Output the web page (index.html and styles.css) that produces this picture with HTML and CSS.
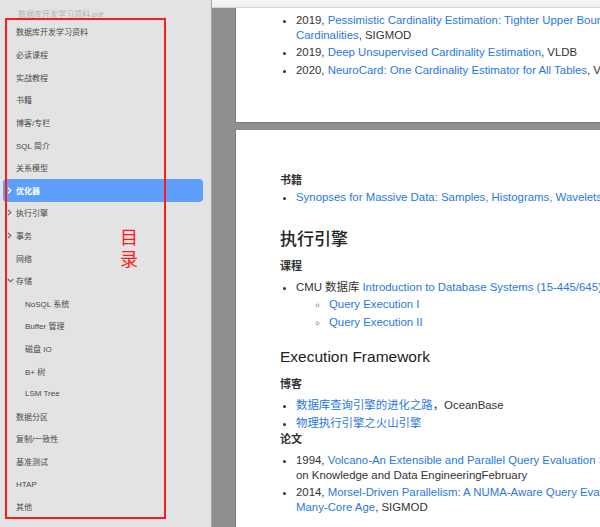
FILE: index.html
```html
<!DOCTYPE html>
<html lang="zh">
<head>
<meta charset="utf-8">
<title>数据库开发学习资料.pdf</title>
<link rel="stylesheet" href="styles.css">
</head>
<body>
<div class="app">
  <aside class="sidebar">
    <div class="doc-title">数据库开发学习资料.pdf</div>
    <ul class="toc">
      <li class="toc-item"><span class="twisty"></span>数据库开发学习资料</li>
      <li class="toc-item"><span class="twisty"></span>必读课程</li>
      <li class="toc-item"><span class="twisty"></span>实战教程</li>
      <li class="toc-item"><span class="twisty"></span>书籍</li>
      <li class="toc-item"><span class="twisty"></span>博客/专栏</li>
      <li class="toc-item"><span class="twisty"></span>SQL 简介</li>
      <li class="toc-item"><span class="twisty"></span>关系模型</li>
      <li class="toc-item active"><span class="twisty"><svg width="5" height="7" viewBox="0 0 5 7"><path d="M1 0.8 L3.8 3.5 L1 6.2" fill="none" stroke="#fff" stroke-width="1.3"/></svg></span>优化器</li>
      <li class="toc-item"><span class="twisty"><svg width="5" height="7" viewBox="0 0 5 7"><path d="M1 0.8 L3.8 3.5 L1 6.2" fill="none" stroke="#666" stroke-width="1.1"/></svg></span>执行引擎</li>
      <li class="toc-item"><span class="twisty"><svg width="5" height="7" viewBox="0 0 5 7"><path d="M1 0.8 L3.8 3.5 L1 6.2" fill="none" stroke="#666" stroke-width="1.1"/></svg></span>事务</li>
      <li class="toc-item"><span class="twisty"></span>网络</li>
      <li class="toc-item"><span class="twisty"><svg width="7" height="5" viewBox="0 0 7 5"><path d="M0.8 1 L3.5 3.8 L6.2 1" fill="none" stroke="#666" stroke-width="1.1"/></svg></span>存储</li>
      <li class="toc-item sub"><span class="twisty"></span>NoSQL 系统</li>
      <li class="toc-item sub"><span class="twisty"></span>Buffer 管理</li>
      <li class="toc-item sub"><span class="twisty"></span>磁盘 IO</li>
      <li class="toc-item sub"><span class="twisty"></span>B+ 树</li>
      <li class="toc-item sub"><span class="twisty"></span>LSM Tree</li>
      <li class="toc-item"><span class="twisty"></span>数据分区</li>
      <li class="toc-item"><span class="twisty"></span>复制/一致性</li>
      <li class="toc-item"><span class="twisty"></span>基准测试</li>
      <li class="toc-item"><span class="twisty"></span>HTAP</li>
      <li class="toc-item"><span class="twisty"></span>其他</li>
    </ul>
    <div class="annot"><span class="annot-label">目<br>录</span></div>
  </aside>
  <main class="viewer">
    <div class="toolbar-edge"></div>
    <div class="pages">
      <section class="page page-1">
        <ul class="list">
          <li>2019, <a href="#">Pessimistic Cardinality Estimation: Tighter Upper Bounds for Intermediate Join</a><br><a href="#">Cardinalities</a>, SIGMOD</li>
          <li>2019, <a href="#">Deep Unsupervised Cardinality Estimation</a>, VLDB</li>
          <li>2020, <a href="#">NeuroCard: One Cardinality Estimator for All Tables</a>, VLDB</li>
        </ul>
      </section>
      <section class="page page-2">
        <h4 class="h4 first">书籍</h4>
        <ul class="list tight">
          <li><a href="#">Synopses for Massive Data: Samples, Histograms, Wavelets, Sketches</a></li>
        </ul>
        <h2 class="h2 cjk">执行引擎</h2>
        <h4 class="h4">课程</h4>
        <ul class="list">
          <li>CMU 数据库 <a href="#">Introduction to Database Systems (15-445/645)</a>
            <ul class="sublist">
              <li><a href="#">Query Execution I</a></li>
              <li><a href="#">Query Execution II</a></li>
            </ul>
          </li>
        </ul>
        <h2 class="h2 latin">Execution Framework</h2>
        <h4 class="h4">博客</h4>
        <ul class="list">
          <li><a href="#">数据库查询引擎的进化之路</a>，OceanBase</li>
          <li><a href="#">物理执行引擎之火山引擎</a></li>
        </ul>
        <h4 class="h4 close">论文</h4>
        <ul class="list">
          <li>1994, <a href="#">Volcano-An Extensible and Parallel Query Evaluation System</a>, IEEE Transactions<br>on Knowledge and Data EngineeringFebruary</li>
          <li>2014, <a href="#">Morsel-Driven Parallelism: A NUMA-Aware Query Evaluation Framework for the</a><br><a href="#">Many-Core Age</a>, SIGMOD</li>
        </ul>
      </section>
    </div>
  </main>
</div>
</body>
</html>
```
FILE: styles.css
```css
* { box-sizing: border-box; }
html, body { margin: 0; padding: 0; }
body {
  width: 600px;
  height: 527px;
  overflow: hidden;
  font-family: "Liberation Sans", "Noto Sans CJK SC", sans-serif;
}
.app {
  display: flex;
  height: 527px;
  overflow: hidden;
}

/* Sidebar */
.sidebar {
  position: relative;
  flex: 0 0 211px;
  width: 211px;
  background: #e3e3e3;
  font-family: "Liberation Sans", "Noto Sans CJK SC", sans-serif;
}
.doc-title {
  padding: 9px 0 0 18px;
  height: 20.7px;
  line-height: 11px;
  font-size: 8px;
  color: #b3b3b3;
}
.toc {
  list-style: none;
  margin: 0;
  padding: 0;
}
.toc-item {
  display: flex;
  align-items: center;
  height: 22.62px;
  padding-left: 7px;
  font-size: 8px;
  color: #4a4a4a;
  white-space: nowrap;
}
.toc-item.sub { padding-left: 16px; }
.twisty {
  flex: 0 0 9px;
  width: 9px;
  display: flex;
  align-items: center;
}
.toc-item.active {
  margin: 0 8px 0 3px;
  padding-left: 4px;
  background: #5e9ffc;
  border-radius: 4px;
  color: #fff;
  font-weight: bold;
}
.annot {
  position: absolute;
  left: 5px;
  top: 18px;
  width: 161px;
  height: 501px;
  border: 2px solid #ff1a1a;
  pointer-events: none;
}
.annot-label {
  position: absolute;
  left: 113px;
  top: 205px;
  font-family: "Noto Sans CJK SC", sans-serif;
  font-size: 18px;
  line-height: 22px;
  color: #ff1a1a;
}

/* Viewer */
.viewer {
  flex: 1 1 auto;
  display: flex;
  flex-direction: column;
  background: #8f8f8f;
  border-left: 1px solid #a6a6a6;
  min-width: 0;
}
.toolbar-edge {
  flex: 0 0 8px;
  background: linear-gradient(#f6f6f6, #ececec);
  border-bottom: 1px solid #d8d8d8;
}
.pages {
  padding-left: 23px;
  display: flex;
  flex-direction: column;
  gap: 8px;
}
.page {
  background: #fff;
  width: 520px;
  padding-left: 44px;
  color: #333;
  font-size: 11.4px;
  border-left: 1px solid #7d7d7d;
}
.page-1 {
  height: 114px;
  padding-top: 4.5px;
  box-shadow: 0 1px 0 #7a7a7a;
}
.page-2 {
  height: 420px;
  padding-top: 42px;
}
a { color: #2878dd; text-decoration: none; }

.list {
  margin: 6px 0 0 0;
  padding-left: 16px;
  list-style: disc;
}
.list li {
  line-height: 15px;
  white-space: nowrap;
}
.list li + li { margin-top: 2.5px; }
.list.tight { margin-top: 1.5px; }
.page-1 .list { margin-top: 0; }
.sublist {
  margin: 2px 0 0 0;
  padding-left: 33px;
  list-style: circle;
}
.sublist li::marker { color: #999; }
.h4 {
  margin: 8px 0 0 0;
  font-size: 11px;
  line-height: 16px;
  font-weight: bold;
  color: #333;
}
.h4.first { margin-top: 0; }
.h4.close { margin-top: 0; }
.h2 {
  margin: 21.5px 0 0 0;
  font-weight: normal;
  color: #222;
}
.h2.cjk {
  font-family: "Noto Sans CJK SC", sans-serif;
  font-size: 17px;
  line-height: 24px;
  font-weight: 500;
}
.h2.latin {
  margin-top: 16.5px;
  font-size: 15.5px;
  line-height: 22px;
}
.h2.latin + .h4 { margin-top: 8px; }
```
